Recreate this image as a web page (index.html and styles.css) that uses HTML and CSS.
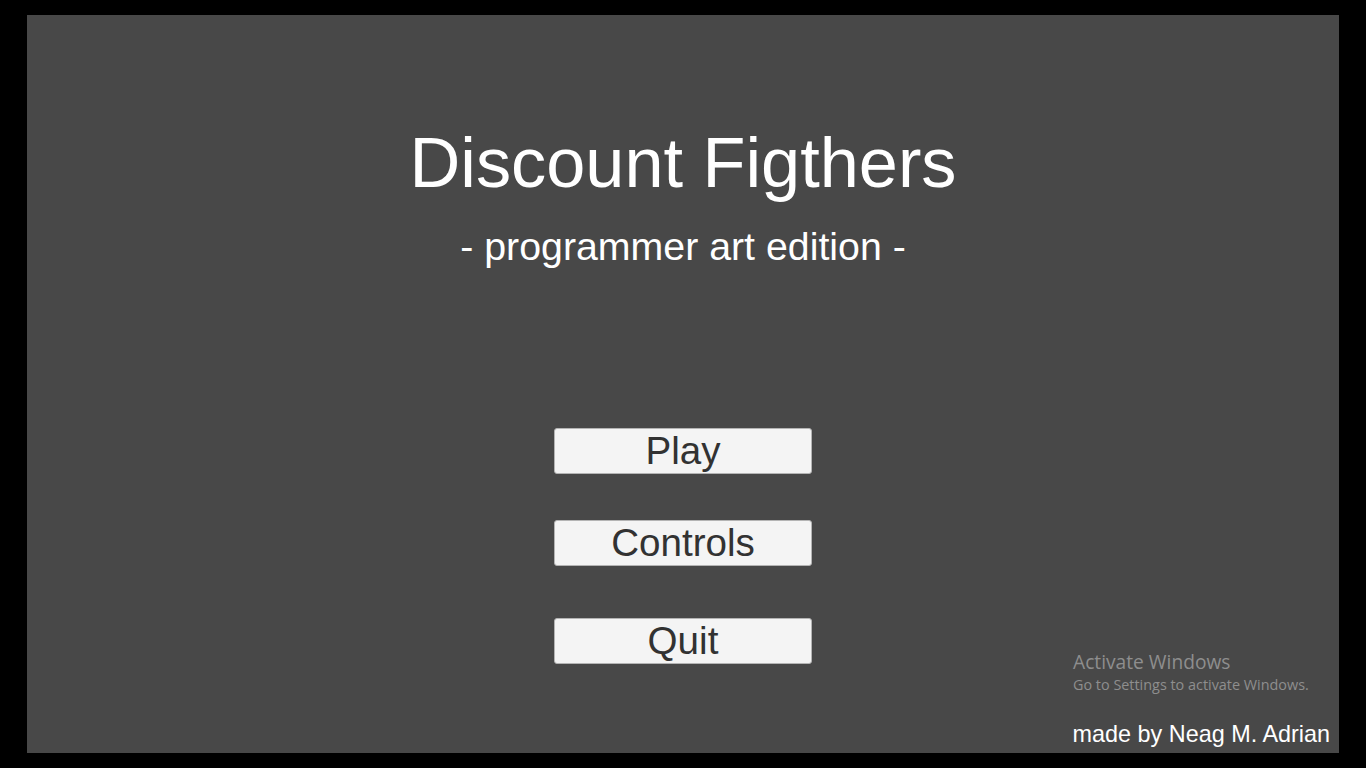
FILE: index.html
```html
<!DOCTYPE html>
<html lang="en">
<head>
<meta charset="utf-8">
<title>Discount Figthers</title>
<link rel="stylesheet" href="styles.css">
</head>
<body>
<main class="screen">
  <h1 class="title">Discount Figthers</h1>
  <p class="subtitle">- programmer art edition -</p>
  <nav class="menu">
    <button class="btn btn-play">Play</button>
    <button class="btn btn-controls">Controls</button>
    <button class="btn btn-quit">Quit</button>
  </nav>
  <footer class="credit">made by Neag M. Adrian</footer>
  <div class="watermark">
    <div class="wm-title">Activate Windows</div>
    <div class="wm-sub">Go to Settings to activate Windows.</div>
  </div>
</main>
</body>
</html>
```
FILE: styles.css
```css
html, body {
  margin: 0;
  padding: 0;
  background: #000;
  width: 1366px;
  height: 768px;
  overflow: hidden;
}

.screen {
  position: relative;
  box-sizing: border-box;
  margin: 15px 0 0 27px;
  width: 1312px;
  height: 738px;
  background: #484848;
  display: flex;
  flex-direction: column;
  align-items: center;
  padding: 113px 9px 7px 0;
  font-family: "Liberation Sans", Arial, sans-serif;
}

.title {
  margin: 0;
  font-size: 70.3px;
  line-height: 70px;
  font-weight: normal;
  color: #fff;
  padding-left: 9px;
}

.subtitle {
  margin: 29px 0 0 0;
  font-size: 39.3px;
  line-height: 39px;
  color: #fff;
  padding-left: 9px;
}

.menu {
  margin-top: 162px;
  display: flex;
  flex-direction: column;
  align-items: center;
  padding-left: 9px;
}

.btn {
  box-sizing: border-box;
  width: 258px;
  height: 46px;
  padding: 0;
  border: 1px solid #b4b4b4;
  border-radius: 3px;
  background: #f4f4f4;
  color: #323232;
  font-family: "Liberation Sans", Arial, sans-serif;
  font-size: 38.6px;
  line-height: 44px;
  text-align: center;
}

.btn-controls {
  margin-top: 46px;
}

.btn-quit {
  margin-top: 52px;
}

.credit {
  margin-top: auto;
  align-self: flex-end;
  font-size: 23.4px;
  line-height: 23px;
  color: #fff;
}

.watermark {
  position: absolute;
  left: 1046px;
  top: 635px;
  font-family: "Open Sans", "Noto Sans", sans-serif;
  color: #8e8e8e;
}

.wm-title {
  font-size: 19.2px;
  line-height: 24px;
}

.wm-sub {
  font-size: 14.4px;
  line-height: 20px;
  margin-top: 1px;
}
```
